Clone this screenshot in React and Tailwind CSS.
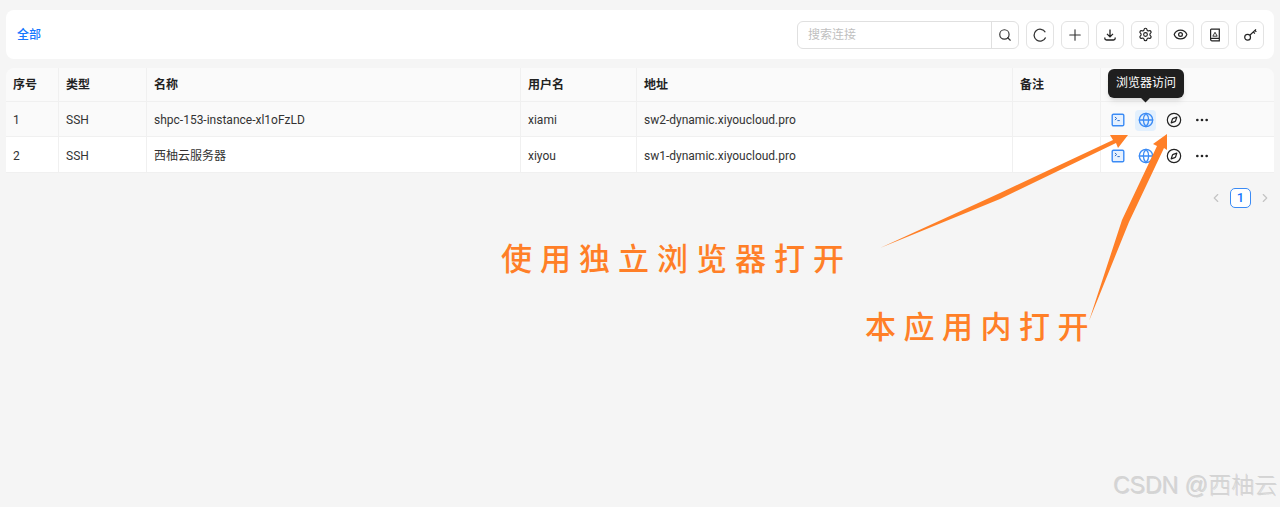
import { ChevronLeft, ChevronRight, Compass, Ellipsis, Eye, Globe, Plus, Search, Settings } from "lucide-react";

const FONT = "font-['Roboto','Noto_Sans_CJK_SC',sans-serif]";
const CELL = "px-[7px] border-b border-r border-[#f0f0f0]";

const rows = [
  { id: 1, type: "SSH", name: "shpc-153-instance-xl1oFzLD", user: "xiami", addr: "sw2-dynamic.xiyoucloud.pro", bg: "bg-[#fafafa]", h: "h-[35px]" },
  { id: 2, type: "SSH", name: "西柚云服务器", user: "xiyou", addr: "sw1-dynamic.xiyoucloud.pro", bg: "bg-white", h: "h-[36px]" },
];

function RefreshIcon() {
  return (
    <svg width="14" height="14" viewBox="0 0 14 14" fill="none" stroke="#333" strokeWidth="1.3">
      <path d="M12.3 4.2A6 6 0 1 0 12.6 9.6" />
    </svg>
  );
}

function DownloadIcon() {
  return (
    <svg width="14" height="14" viewBox="0 0 14 14" fill="none" stroke="#222" strokeWidth="1.3">
      <path d="M7 1.5v7.2M4 5.9l3 3 3-3M1.8 9.6v.7c0 1 .7 1.7 1.7 1.7h7c1 0 1.7-.7 1.7-1.7v-.7" />
    </svg>
  );
}

function BookIcon() {
  return (
    <svg width="14" height="14" viewBox="0 0 14 14" fill="none" stroke="#222" strokeWidth="1.2">
      <path d="M2.6 11.3V1.9c0-.4.3-.7.7-.7h8v11.6H3.8c-.7 0-1.2-.6-1.2-1.2s.5-1.2 1.2-1.2h7.5" />
      <path d="M4.8 8.2L7 4.3l2.2 3.9z" strokeWidth="0.9" />
    </svg>
  );
}

function KeyIcon() {
  return (
    <svg width="15" height="15" viewBox="0 0 15 15" fill="none" stroke="#222" strokeWidth="1.2">
      <circle cx="4.6" cy="10.2" r="2.9" />
      <path d="M6.8 8.2L13 2.4M10.4 4.8l1.4 1.8M12 3.3l1.3 1.5" />
    </svg>
  );
}

function TerminalIcon() {
  return (
    <svg width="14" height="14" viewBox="0 0 14 14" fill="none">
      <rect x="1.2" y="1.2" width="11.6" height="11.6" rx="1.3" fill="#e6f1ff" stroke="#3b8bf5" strokeWidth="1.4" />
      <path d="M3.9 4l1.8 1.5L3.9 7M6.4 7.6h2.4" stroke="#2f6fc9" strokeWidth="1" />
    </svg>
  );
}

function ToolButton({ children }) {
  return (
    <button className="w-7 h-7 flex items-center justify-center rounded-md border border-[#e3e3e3] bg-white">
      {children}
    </button>
  );
}

function RowActions({ hover }) {
  return (
    <div className="flex items-center pl-[6px]">
      <span className="w-[21px] h-[21px] flex items-center justify-center"><TerminalIcon /></span>
      <span className={`ml-[7px] w-[21px] h-[21px] flex items-center justify-center rounded ${hover ? "bg-[#e3f0fd]" : ""}`}>
        <Globe size={16} color="#3b8bf5" strokeWidth={2} />
      </span>
      <span className="ml-[7px] w-[21px] h-[21px] flex items-center justify-center">
        <Compass size={16} color="#222" strokeWidth={1.8} />
      </span>
      <span className="ml-[7px] w-[21px] h-[21px] flex items-center justify-center">
        <Ellipsis size={16} color="#222" strokeWidth={2} />
      </span>
    </div>
  );
}

export default function App() {
  return (
    <div className={`relative h-[507px] overflow-hidden bg-[#f5f5f5] px-[6px] pt-[10px] text-xs text-[#333] ${FONT}`}>
      <div className="h-[49px] rounded-lg bg-white flex items-center justify-between pl-[11px] pr-[10px]">
        <span className="text-[#1677ff] font-medium">全部</span>
        <div className="flex items-center gap-[7px]">
          <div className="w-[222px] h-7 flex rounded-md border border-[#e0e0e0] bg-white">
            <span className="flex-1 pl-[10px] leading-[26px] text-[#bfbfbf]">搜索连接</span>
            <span className="w-[27px] flex items-center justify-center border-l border-[#e0e0e0]">
              <Search size={14} color="#333" strokeWidth={2} />
            </span>
          </div>
          <ToolButton><RefreshIcon /></ToolButton>
          <ToolButton><Plus size={18} color="#333" strokeWidth={1.5} /></ToolButton>
          <ToolButton><DownloadIcon /></ToolButton>
          <ToolButton><Settings size={15} color="#222" strokeWidth={1.8} /></ToolButton>
          <ToolButton><Eye size={15} color="#222" strokeWidth={2} /></ToolButton>
          <ToolButton><BookIcon /></ToolButton>
          <ToolButton><KeyIcon /></ToolButton>
        </div>
      </div>

      <table className="mt-[9px] w-[1268px] table-fixed border-separate border-spacing-0">
        <colgroup>
          <col className="w-[53px]" />
          <col className="w-[88px]" />
          <col className="w-[374px]" />
          <col className="w-[116px]" />
          <col className="w-[376px]" />
          <col className="w-[88px]" />
          <col className="w-[173px]" />
        </colgroup>
        <thead>
          <tr className="h-[34px] bg-[#fafafa] text-left text-[#222]">
            {["序号", "类型", "名称", "用户名", "地址", "备注"].map((h, i) => (
              <th key={h} className={`${CELL} font-bold ${i === 0 ? "rounded-tl-lg" : ""}`}>{h}</th>
            ))}
            <th className="pl-[7px] font-bold border-b border-[#f0f0f0] rounded-tr-lg">操作</th>
          </tr>
        </thead>
        <tbody>
          {rows.map((r) => (
            <tr key={r.id} className={`${r.h} ${r.bg}`}>
              <td className={`${CELL} pt-[2px]`}>{r.id}</td>
              <td className={`${CELL} pt-[2px]`}>{r.type}</td>
              <td className={`${CELL} pt-[2px]`}>{r.name}</td>
              <td className={`${CELL} pt-[2px]`}>{r.user}</td>
              <td className={`${CELL} pt-[2px]`}>{r.addr}</td>
              <td className={CELL}></td>
              <td className="p-0 pt-[2px] border-b border-[#f0f0f0]"><RowActions hover={r.id === 1} /></td>
            </tr>
          ))}
        </tbody>
      </table>

      <div className="mt-[15px] flex items-center justify-end pr-[2px] gap-[7px]">
        <ChevronLeft size={14} color="#c4c4c4" />
        <span className="w-[21px] h-[20px] flex items-center justify-center rounded-[5px] border border-[#3b8bf5] bg-white text-[13px] text-[#1677ff] font-medium">1</span>
        <ChevronRight size={14} color="#c4c4c4" />
      </div>

      {/* tooltip over the action header */}
      <div className="absolute left-[1108px] top-[69px] w-[76px] h-[29px] rounded-md bg-[#1f1f1f] text-white text-center leading-[29px] shadow-md">
        浏览器访问
        <span className="absolute left-[34px] top-[25px] w-[7px] h-[7px] rotate-45 bg-[#1f1f1f]" />
      </div>

      {/* hand drawn arrows */}
      <svg className="absolute left-0 top-0 pointer-events-none" width="1280" height="507" viewBox="0 0 1280 507" fill="#ff7f27">
        <path d="M880 248L1000 193L1113 140L1110 135L1128 135L1118 148L1116 143L1000 199Z" />
        <path d="M1089 321L1122 220L1157 146L1153 144L1167 134L1167 150L1164 148L1129 222Z" />
      </svg>

      <div className="absolute left-[501px] top-[235px] text-[31px] leading-[44px] tracking-[8px] text-[#ff7f27] font-medium font-['Noto_Sans_CJK_SC',sans-serif] whitespace-nowrap">
        使用独立浏览器打开
      </div>
      <div className="absolute left-[865px] top-[303px] text-[31px] leading-[44px] tracking-[7.5px] text-[#ff7f27] font-medium font-['Noto_Sans_CJK_SC',sans-serif] whitespace-nowrap">
        本应用内打开
      </div>
      <div className="absolute left-[1113px] top-[470px] text-[23px] leading-[30px] font-light text-[#d4d4d4] [text-shadow:1px_1px_0_rgba(0,0,0,0.12)] font-['Liberation_Sans','Noto_Sans_CJK_SC',sans-serif] whitespace-nowrap">
        CSDN @西柚云
      </div>
    </div>
  );
}
